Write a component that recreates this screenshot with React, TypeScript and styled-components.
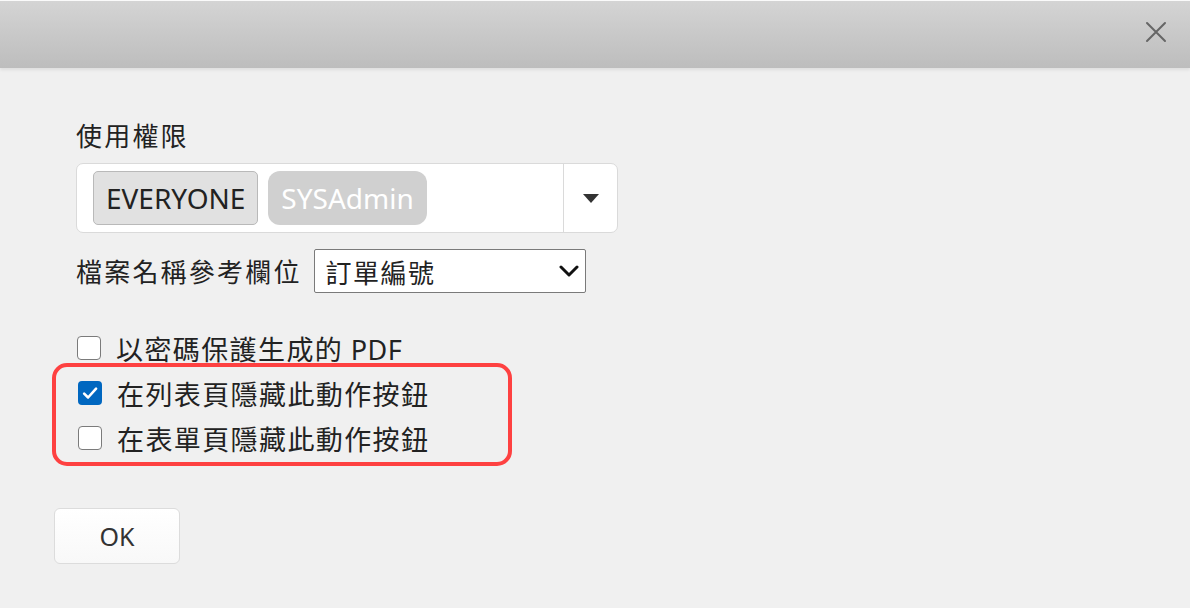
import React from "react";
import styled, { createGlobalStyle } from "styled-components";

const Global = createGlobalStyle`
  html, body { margin: 0; padding: 0; background: #f0f0f0; }
  body { font-family: "Noto Sans", "Noto Sans CJK TC", sans-serif; color: #222; }
  * { box-sizing: border-box; }
`;

const Page = styled.div`
  width: 1190px;
  height: 608px;
  background: #f0f0f0;
  display: flex;
  flex-direction: column;
  overflow: hidden;
`;

const Header = styled.div`
  height: 68px;
  flex: none;
  border-top: 1px solid #fafafa;
  background: linear-gradient(#d4d4d4, #bdbdbd);
  box-shadow: 0 2px 3px rgba(0, 0, 0, 0.08);
  display: flex;
  justify-content: flex-end;
  align-items: center;
  padding-right: 22px;
`;

const CloseBtn = styled.button`
  width: 24px;
  height: 24px;
  border: 0;
  padding: 0;
  background: transparent;
  display: flex;
  align-items: center;
  justify-content: center;
  margin-top: -5px;
`;

const Body = styled.div`
  padding: 49px 0 0 76px;
  display: flex;
  flex-direction: column;
  align-items: flex-start;
`;

const FieldLabel = styled.div`
  font-family: "Noto Sans CJK TC", sans-serif;
  font-size: 26px;
  letter-spacing: 2.2px;
  line-height: 36px;
  color: #222;
`;

const MultiBox = styled.div`
  margin-top: 10px;
  width: 542px;
  height: 70px;
  border: 1px solid #dadada;
  border-radius: 7px;
  background: #fff;
  display: flex;
  align-items: stretch;
`;

const Tags = styled.div`
  flex: 1;
  display: flex;
  align-items: center;
  gap: 10px;
  padding-left: 16px;
`;

const Tag = styled.span<{ $muted?: boolean }>`
  height: 54px;
  padding: 0 ${(p) => (p.$muted ? "13px" : "12px")};
  display: flex;
  align-items: center;
  font-size: 28px;
  border-radius: ${(p) => (p.$muted ? "12px" : "5px")};
  background: ${(p) => (p.$muted ? "#d0d0d0" : "#e1e1e1")};
  border: ${(p) => (p.$muted ? "none" : "1px solid #b9b9b9")};
  color: ${(p) => (p.$muted ? "#fff" : "#222")};
`;

const DropBtn = styled.div`
  width: 54px;
  border-left: 1px solid #dadada;
  display: flex;
  align-items: center;
  justify-content: center;
`;

const Row = styled.div`
  margin-top: 16px;
  display: flex;
  align-items: center;
  gap: 12px;
`;

const Select = styled.div`
  width: 272px;
  height: 44px;
  border: 1.5px solid #7a7a7a;
  border-radius: 2px;
  background: #fff;
  display: flex;
  align-items: center;
  justify-content: space-between;
  padding: 0 6px 0 11px;
  font-family: "Noto Sans CJK TC", sans-serif;
  font-size: 26px;
  letter-spacing: 1.5px;
`;

const Checks = styled.div`
  margin-top: 37px;
  display: flex;
  flex-direction: column;
`;

const Highlight = styled.div`
  margin: -3px 0 0 -24px;
  width: 460px;
  padding: 8px 0 6px 21px;
  border: 4px solid #fe4141;
  border-radius: 15px;
  display: flex;
  flex-direction: column;
  gap: 9px;
`;

const CheckRow = styled.label`
  height: 36px;
  display: flex;
  align-items: center;
  gap: 15px;
  font-family: "Noto Sans CJK TC", sans-serif;
  font-size: 27px;
  letter-spacing: 1.4px;
  color: #222;
`;

const Box = styled.span<{ $checked?: boolean }>`
  width: 24px;
  height: 24px;
  flex: none;
  margin-left: 1px;
  border-radius: 4px;
  border: ${(p) => (p.$checked ? "none" : "1.5px solid #7b7b7b")};
  background: ${(p) => (p.$checked ? "#0067c0" : "#fff")};
  display: flex;
  align-items: center;
  justify-content: center;
`;

const Pdf = styled.span`
  font-family: "Noto Sans", sans-serif;
  letter-spacing: 0.5px;
`;

const OkButton = styled.button`
  margin: 42px 0 0 -22px;
  width: 126px;
  height: 56px;
  border: 1px solid #dcdcdc;
  border-radius: 6px;
  background: linear-gradient(#ffffff, #f8f8f8);
  font-family: "Noto Sans", sans-serif;
  font-size: 25px;
  color: #333;
`;

const Check = ({ checked, children }: { checked?: boolean; children: React.ReactNode }) => (
  <CheckRow>
    <Box $checked={checked}>
      {checked && (
        <svg width="18" height="18" viewBox="0 0 16 16">
          <path d="M2.8 8.6 L6.3 12 L13.4 4.2" fill="none" stroke="#fff" strokeWidth="2.3" strokeLinecap="round" strokeLinejoin="round" />
        </svg>
      )}
    </Box>
    <span>{children}</span>
  </CheckRow>
);

export default function App() {
  return (
    <Page>
      <Global />
      <Header>
        <CloseBtn aria-label="close">
          <svg width="22" height="22" viewBox="0 0 22 22">
            <path d="M2 2 L20 20 M20 2 L2 20" stroke="#666" strokeWidth="2" strokeLinecap="round" />
          </svg>
        </CloseBtn>
      </Header>
      <Body>
        <FieldLabel>使用權限</FieldLabel>
        <MultiBox>
          <Tags>
            <Tag>EVERYONE</Tag>
            <Tag $muted>SYSAdmin</Tag>
          </Tags>
          <DropBtn>
            <svg width="16" height="9" viewBox="0 0 16 9">
              <path d="M0 0 H16 L8 9 Z" fill="#333" />
            </svg>
          </DropBtn>
        </MultiBox>
        <Row>
          <FieldLabel>檔案名稱參考欄位</FieldLabel>
          <Select>
            <span>訂單編號</span>
            <svg width="20" height="12" viewBox="0 0 20 12">
              <path d="M2 2 L10 10 L18 2" fill="none" stroke="#111" strokeWidth="3" strokeLinecap="round" strokeLinejoin="round" />
            </svg>
          </Select>
        </Row>
        <Checks>
          <Check>
            以密碼保護生成的 <Pdf>PDF</Pdf>
          </Check>
          <Highlight>
            <Check checked>在列表頁隱藏此動作按鈕</Check>
            <Check>在表單頁隱藏此動作按鈕</Check>
          </Highlight>
        </Checks>
        <OkButton>OK</OkButton>
      </Body>
    </Page>
  );
}
